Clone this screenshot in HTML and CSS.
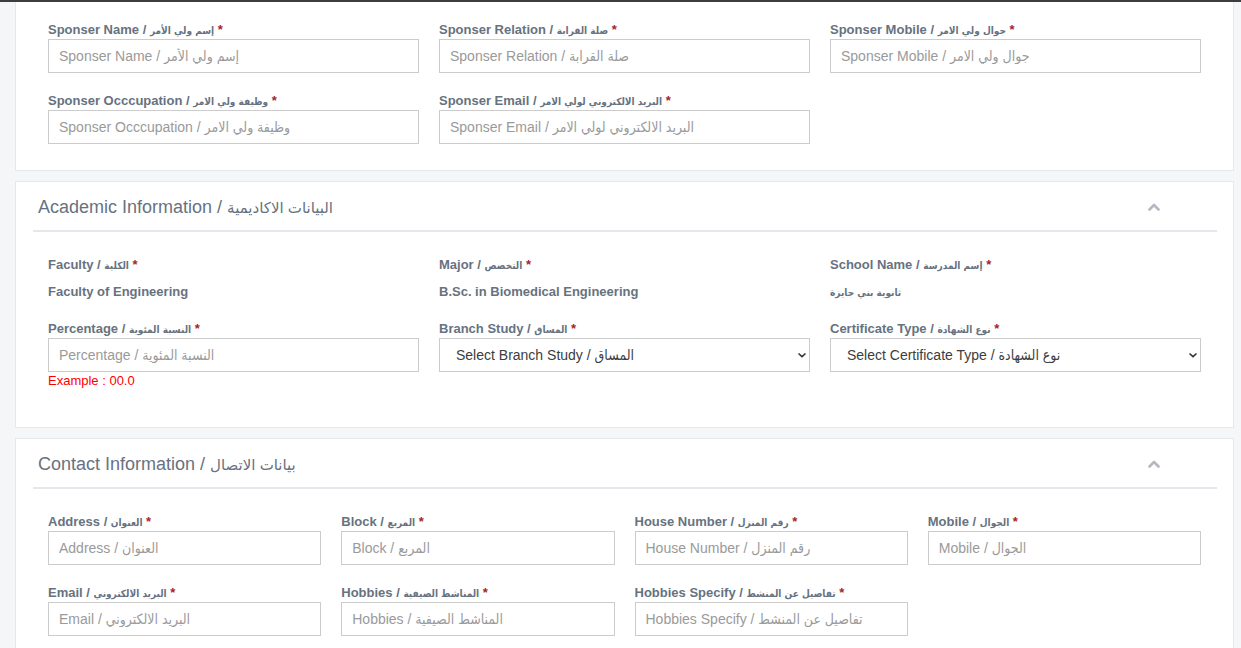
FILE: index.html
```html
<!DOCTYPE html>
<html lang="en">
<head>
<meta charset="utf-8">
<title>Registration</title>
<link rel="stylesheet" href="styles.css">
</head>
<body>
<div class="topbar"></div>
<main class="page">

  <section class="card card--cut">
    <div class="card-body">
      <div class="grid grid-3">
        <div class="field">
          <label class="label">Sponser Name / <span class="ar">إسم ولي الأمر</span> <span class="req">*</span></label>
          <input class="input" type="text" placeholder="Sponser Name / إسم ولي الأمر">
        </div>
        <div class="field">
          <label class="label">Sponser Relation / <span class="ar">صلة القرابة</span> <span class="req">*</span></label>
          <input class="input" type="text" placeholder="Sponser Relation / صلة القرابة">
        </div>
        <div class="field">
          <label class="label">Sponser Mobile / <span class="ar">جوال ولي الامر</span> <span class="req">*</span></label>
          <input class="input" type="text" placeholder="Sponser Mobile / جوال ولي الامر">
        </div>
        <div class="field">
          <label class="label">Sponser Occcupation / <span class="ar">وظيفة ولي الامر</span> <span class="req">*</span></label>
          <input class="input" type="text" placeholder="Sponser Occcupation / وظيفة ولي الامر">
        </div>
        <div class="field">
          <label class="label">Sponser Email / <span class="ar">البريد الالكتروني لولي الامر</span> <span class="req">*</span></label>
          <input class="input" type="text" placeholder="Sponser Email / البريد الالكتروني لولي الامر">
        </div>
      </div>
    </div>
  </section>

  <section class="card">
    <header class="card-head">
      <h2 class="card-title">Academic Information / <span class="ar-title">البيانات الاكاديمية</span></h2>
      <svg class="collapse-icon" width="12" height="8" viewBox="0 0 12 8"><polyline points="1.5,6.5 6,2 10.5,6.5" fill="none" stroke="#b3b9c2" stroke-width="2.6" stroke-linecap="round" stroke-linejoin="round"/></svg>
    </header>
    <div class="card-body card-body--padded">
      <div class="grid grid-3">
        <div class="field">
          <label class="label">Faculty / <span class="ar">الكلية</span> <span class="req">*</span></label>
          <div class="value">Faculty of Engineering</div>
        </div>
        <div class="field">
          <label class="label">Major / <span class="ar">التخصص</span> <span class="req">*</span></label>
          <div class="value">B.Sc. in Biomedical Engineering</div>
        </div>
        <div class="field">
          <label class="label">School Name / <span class="ar">إسم المدرسة</span> <span class="req">*</span></label>
          <div class="value"><span class="ar">ثانوية بني جايزة</span></div>
        </div>
        <div class="field">
          <label class="label">Percentage / <span class="ar">النسبة المئوية</span> <span class="req">*</span></label>
          <input class="input" type="text" placeholder="Percentage / النسبة المئوية">
          <div class="hint">Example : 00.0</div>
        </div>
        <div class="field">
          <label class="label">Branch Study / <span class="ar">المساق</span> <span class="req">*</span></label>
          <div class="select-wrap">
            <select class="select"><option>Select Branch Study / المساق</option></select>
            <svg class="select-caret" width="10" height="6" viewBox="0 0 10 6"><polyline points="1.5,1.5 5,4.6 8.5,1.5" fill="none" stroke="#333" stroke-width="1.6"/></svg>
          </div>
        </div>
        <div class="field">
          <label class="label">Certificate Type / <span class="ar">نوع الشهادة</span> <span class="req">*</span></label>
          <div class="select-wrap">
            <select class="select"><option>Select Certificate Type / نوع الشهادة</option></select>
            <svg class="select-caret" width="10" height="6" viewBox="0 0 10 6"><polyline points="1.5,1.5 5,4.6 8.5,1.5" fill="none" stroke="#333" stroke-width="1.6"/></svg>
          </div>
        </div>
      </div>
    </div>
  </section>

  <section class="card">
    <header class="card-head">
      <h2 class="card-title">Contact Information / <span class="ar-title">بيانات الاتصال</span></h2>
      <svg class="collapse-icon" width="12" height="8" viewBox="0 0 12 8"><polyline points="1.5,6.5 6,2 10.5,6.5" fill="none" stroke="#b3b9c2" stroke-width="2.6" stroke-linecap="round" stroke-linejoin="round"/></svg>
    </header>
    <div class="card-body card-body--padded">
      <div class="grid grid-4">
        <div class="field">
          <label class="label">Address / <span class="ar">العنوان</span> <span class="req">*</span></label>
          <input class="input" type="text" placeholder="Address / العنوان">
        </div>
        <div class="field">
          <label class="label">Block / <span class="ar">المربع</span> <span class="req">*</span></label>
          <input class="input" type="text" placeholder="Block / المربع">
        </div>
        <div class="field">
          <label class="label">House Number / <span class="ar">رقم المنزل</span> <span class="req">*</span></label>
          <input class="input" type="text" placeholder="House Number / رقم المنزل">
        </div>
        <div class="field">
          <label class="label">Mobile / <span class="ar">الجوال</span> <span class="req">*</span></label>
          <input class="input" type="text" placeholder="Mobile / الجوال">
        </div>
        <div class="field">
          <label class="label">Email / <span class="ar">البريد الالكتروني</span> <span class="req">*</span></label>
          <input class="input" type="text" placeholder="Email / البريد الالكتروني">
        </div>
        <div class="field">
          <label class="label">Hobbies / <span class="ar">المناشط الصيفية</span> <span class="req">*</span></label>
          <input class="input" type="text" placeholder="Hobbies / المناشط الصيفية">
        </div>
        <div class="field">
          <label class="label">Hobbies Specify / <span class="ar">تفاصيل عن المنشط</span> <span class="req">*</span></label>
          <input class="input" type="text" placeholder="Hobbies Specify / تفاصيل عن المنشط">
        </div>
      </div>
    </div>
  </section>

</main>
</body>
</html>
```

FILE: styles.css
```css
* { box-sizing: border-box; }

html, body {
  margin: 0;
  padding: 0;
  background: #f5f6f8;
  font-family: "Liberation Sans", Arial, "DejaVu Sans", sans-serif;
  color: #67727f;
  overflow: hidden;
}

.topbar {
  height: 2px;
  background: #3d3d3d;
}

.page {
  padding: 0 7px 0 15px;
}

.card {
  background: #fff;
  border: 1px solid #e6e8ec;
  margin-bottom: 10px;
}

.card--cut {
  border-top: none;
}

.card-body {
  padding: 18px 32px 26px;
}

.card-body--padded {
  padding-top: 23px;
}

.card-head {
  display: flex;
  align-items: center;
  justify-content: space-between;
  height: 50px;
  margin: 0 16px 0 17px;
  padding: 2px 57px 0 5px;
  border-bottom: 2px solid #e4e8ed;
}

.card-title {
  margin: 0;
  font-size: 18px;
  line-height: 21px;
  font-weight: normal;
  color: #67727f;
}

.ar-title {
  font-size: 15px;
  line-height: 15px;
}

.collapse-icon {
  display: block;
}

.grid {
  display: grid;
  column-gap: 20px;
  row-gap: 18px;
}

.grid-3 { grid-template-columns: repeat(3, 1fr); }
.grid-4 { grid-template-columns: repeat(4, 1fr); }

.field {
  display: flex;
  flex-direction: column;
}

.label {
  display: block;
  height: 18px;
  font-size: 13px;
  line-height: 20px;
  font-weight: bold;
  color: #67727f;
  margin-bottom: 1px;
  white-space: nowrap;
}

.ar {
  font-family: "DejaVu Sans Condensed", "DejaVu Sans", sans-serif;
  font-stretch: condensed;
  font-size: 10px;
  line-height: 10px;
}

.req {
  color: #a3262a;
}

.input {
  display: block;
  width: 100%;
  height: 34px;
  border: 1px solid #cccccc;
  border-radius: 0;
  padding: 0 10px;
  font-family: "Liberation Sans", Arial, "DejaVu Sans Condensed", "DejaVu Sans", sans-serif;
  font-size: 14px;
  color: #555;
  background: #fff;
  outline: none;
}

.input::placeholder {
  color: #9a9a9a;
}

.value {
  height: 18px;
  margin-top: 9px;
  font-size: 13px;
  line-height: 18px;
  font-weight: bold;
  color: #67727f;
}

.hint {
  font-size: 13px;
  line-height: 18px;
  color: #ff0000;
  margin-bottom: 11px;
}

.select-wrap {
  position: relative;
}

.select {
  display: block;
  width: 100%;
  height: 34px;
  border: 1px solid #cccccc;
  border-radius: 0;
  padding: 0 30px 0 16px;
  font-family: "Liberation Sans", Arial, "DejaVu Sans Condensed", "DejaVu Sans", sans-serif;
  font-size: 14px;
  color: #3d3d3d;
  background: #fff;
  -webkit-appearance: none;
  appearance: none;
  outline: none;
}

.select-caret {
  position: absolute;
  right: 3px;
  top: 14px;
  pointer-events: none;
}
```
